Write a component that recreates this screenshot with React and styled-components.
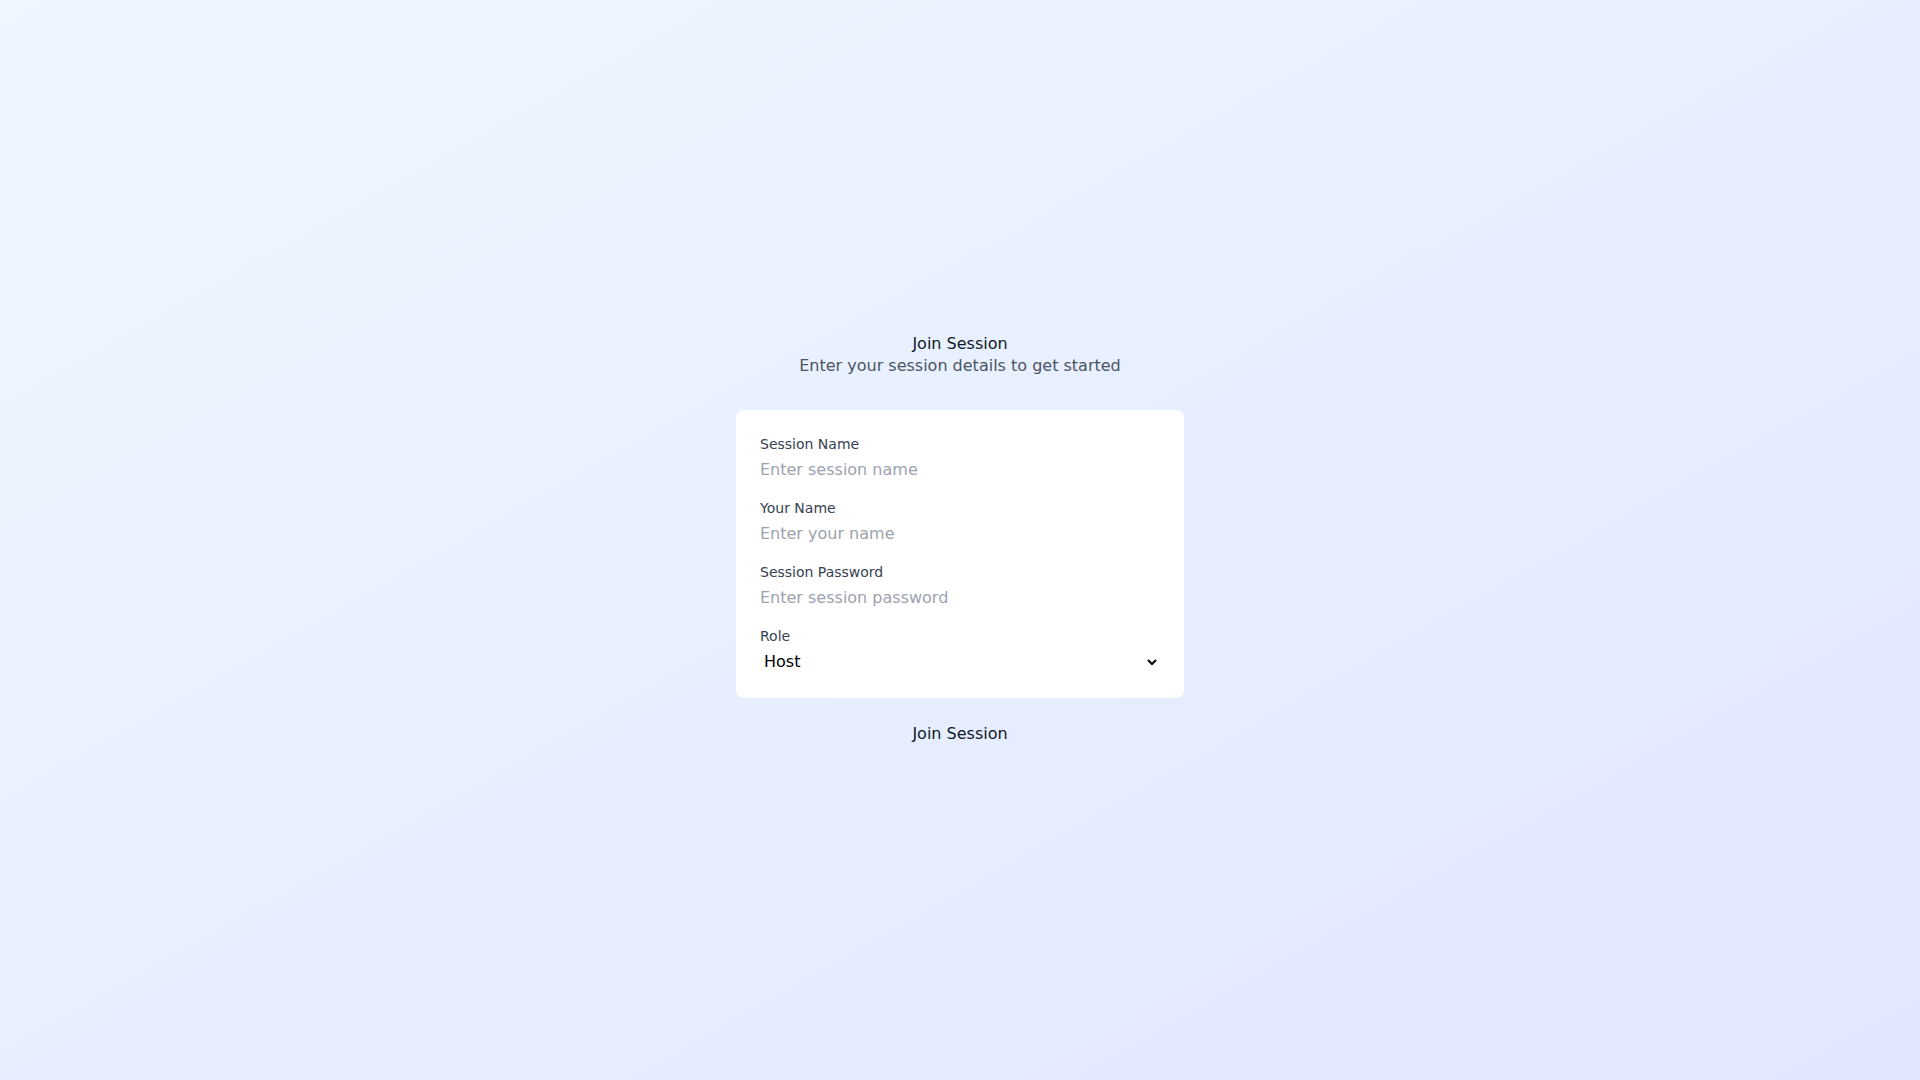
import React from "react";
import styled, { createGlobalStyle } from "styled-components";

const GlobalStyle = createGlobalStyle`
  * { box-sizing: border-box; }
  html, body { margin: 0; padding: 0; }
  body {
    font-family: "DejaVu Sans", sans-serif;
    color: #111827;
  }
`;

const Page = styled.main`
  min-height: 100vh;
  display: flex;
  align-items: center;
  justify-content: center;
  background: linear-gradient(to bottom right, #eff6ff, #e0e7ff);
`;

const Wrapper = styled.div`
  width: 448px;
  display: flex;
  flex-direction: column;
  align-items: stretch;
`;

const Header = styled.header`
  text-align: center;
  margin-bottom: 32px;
`;

const Title = styled.h1`
  margin: 0;
  font-size: 16px;
  font-weight: 400;
  line-height: 20px;
  color: #111827;
`;

const Subtitle = styled.p`
  margin: 0;
  font-size: 16px;
  line-height: 24px;
  color: #4b5563;
`;

const Card = styled.form`
  background: #ffffff;
  border-radius: 8px;
  padding: 24px;
  display: flex;
  flex-direction: column;
  gap: 16px;
`;

const Field = styled.div`
  display: flex;
  flex-direction: column;
`;

const Label = styled.label`
  display: block;
  font-size: 14px;
  line-height: 20px;
  color: #374151;
  margin-bottom: 4px;
`;

const Input = styled.input`
  display: block;
  width: 100%;
  height: 24px;
  padding: 0;
  border: none;
  outline: none;
  background: transparent;
  font-family: inherit;
  font-size: 16px;
  line-height: 24px;
  color: #111827;
  &::placeholder {
    color: #9ca3af;
  }
`;

const Select = styled.select`
  display: block;
  width: 100%;
  height: 24px;
  padding: 0 0 2px 0;
  border: none;
  outline: none;
  background: transparent;
  font-family: inherit;
  font-size: 16px;
  color: #000000;
`;

const SubmitButton = styled.button`
  margin-top: 24px;
  align-self: center;
  padding: 0;
  border: none;
  background: transparent;
  font-family: inherit;
  font-size: 16px;
  line-height: 24px;
  color: #111827;
  cursor: pointer;
`;

const fields = [
  { id: "sessionName", label: "Session Name", placeholder: "Enter session name", type: "text" },
  { id: "yourName", label: "Your Name", placeholder: "Enter your name", type: "text" },
  { id: "password", label: "Session Password", placeholder: "Enter session password", type: "password" },
];

export default function App() {
  return (
    <>
      <GlobalStyle />
      <Page>
        <Wrapper>
          <Header>
            <Title>Join Session</Title>
            <Subtitle>Enter your session details to get started</Subtitle>
          </Header>
          <Card onSubmit={(e) => e.preventDefault()}>
            {fields.map((f) => (
              <Field key={f.id}>
                <Label htmlFor={f.id}>{f.label}</Label>
                <Input id={f.id} type={f.type} placeholder={f.placeholder} />
              </Field>
            ))}
            <Field>
              <Label htmlFor="role">Role</Label>
              <Select id="role" defaultValue="host">
                <option value="host">Host</option>
                <option value="participant">Participant</option>
              </Select>
            </Field>
          </Card>
          <SubmitButton type="button">Join Session</SubmitButton>
        </Wrapper>
      </Page>
    </>
  );
}
